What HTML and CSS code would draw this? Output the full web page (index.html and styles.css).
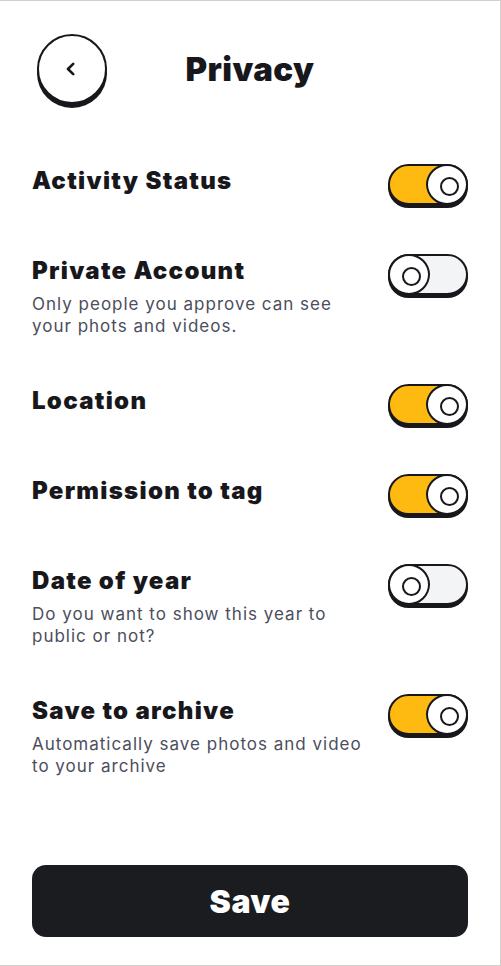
FILE: index.html
```html
<!DOCTYPE html>
<html lang="en">
<head>
<meta charset="utf-8">
<title>Privacy</title>
<link rel="stylesheet" href="styles.css">
</head>
<body>
<div class="screen">
  <header class="header">
    <button class="back" aria-label="Back">
      <svg width="14" height="14" viewBox="0 0 14 14"><path d="M9.2 1.8 L4 7 L9.2 12.2" fill="none" stroke="#18181c" stroke-width="2.6" stroke-linecap="round" stroke-linejoin="round"/></svg>
    </button>
    <h1 class="title">Privacy</h1>
    <span class="spacer"></span>
  </header>

  <ul class="settings">
    <li class="row">
      <div class="text"><h2 class="label">Activity Status</h2></div>
      <span class="toggle on"><span class="knob"></span></span>
    </li>
    <li class="row">
      <div class="text"><h2 class="label">Private Account</h2><p class="desc">Only people you approve can see your phots and videos.</p></div>
      <span class="toggle"><span class="knob"></span></span>
    </li>
    <li class="row">
      <div class="text"><h2 class="label">Location</h2></div>
      <span class="toggle on"><span class="knob"></span></span>
    </li>
    <li class="row">
      <div class="text"><h2 class="label">Permission to tag</h2></div>
      <span class="toggle on"><span class="knob"></span></span>
    </li>
    <li class="row">
      <div class="text"><h2 class="label">Date of year</h2><p class="desc">Do you want to show this year to public or not?</p></div>
      <span class="toggle"><span class="knob"></span></span>
    </li>
    <li class="row">
      <div class="text"><h2 class="label">Save to archive</h2><p class="desc">Automatically save photos and video to your archive</p></div>
      <span class="toggle on"><span class="knob"></span></span>
    </li>
  </ul>

  <button class="save">Save</button>
</div>
</body>
</html>
```

FILE: styles.css
```css
* { box-sizing: border-box; }
html, body { margin: 0; padding: 0; background: #fff; }
body {
  font-family: Inter, "Noto Sans", sans-serif;
  color: #18181c;
}
.screen {
  width: 501px;
  height: 966px;
  border-top: 1px solid #d2d0ca;
  border-right: 1px solid #d2d0ca;
  border-bottom: 1px solid #d2d0ca;
  padding: 0 32px 0 32px;
  display: flex;
  flex-direction: column;
}
.header {
  display: grid;
  grid-template-columns: 1fr auto 1fr;
  align-items: center;
  margin-top: 33px;
}
.back {
  width: 70px;
  height: 70px;
  margin-left: 5px;
  border-radius: 50%;
  border: 2px solid #18181c;
  background: #fff;
  box-shadow: 0 4px 0 #18181c;
  display: flex;
  align-items: center;
  justify-content: center;
  padding: 0 2px 0 0;
}
.title {
  margin: 0;
  font-size: 33px;
  font-weight: 900;
  letter-spacing: 0.4px;
}
.settings {
  list-style: none;
  margin: 60px 0 0 0;
  padding: 0;
  display: flex;
  flex-direction: column;
  gap: 49px;
}
.row {
  display: flex;
  align-items: flex-start;
  justify-content: space-between;
  gap: 20px;
}
.text { flex: 1; max-width: 340px; }
.label {
  margin: 0;
  font-size: 24px;
  line-height: 34px;
  font-weight: 900;
  letter-spacing: 1.3px;
}
.desc {
  margin: 5px 0 -2px 0;
  font-size: 17px;
  line-height: 22px;
  letter-spacing: 1px;
  color: #4b4e5c;
}
.toggle {
  position: relative;
  flex: none;
  width: 80px;
  height: 41px;
  border: 2px solid #18181c;
  border-radius: 21px;
  background: #f3f4f6;
  box-shadow: 0 3px 0 #18181c;
}
.toggle.on { background: #ffba12; }
.knob {
  position: absolute;
  top: -2px;
  left: -2px;
  width: 42px;
  height: 41px;
  border: 2px solid #18181c;
  border-radius: 50%;
  background: #fff;
}
.knob::after {
  content: "";
  position: absolute;
  left: 50%;
  top: 50%;
  width: 15px;
  height: 15px;
  margin: -7.5px 0 0 -7.5px;
  border: 2px solid #18181c;
  border-radius: 50%;
}
.toggle.on .knob { left: auto; right: -2px; }
.save {
  margin-top: auto;
  margin-bottom: 28px;
  height: 72px;
  border: none;
  border-radius: 14px;
  background: #1b1c20;
  color: #fff;
  font-family: Inter, "Noto Sans", sans-serif;
  font-size: 32px;
  font-weight: 900;
  letter-spacing: 0.5px;
}
```
